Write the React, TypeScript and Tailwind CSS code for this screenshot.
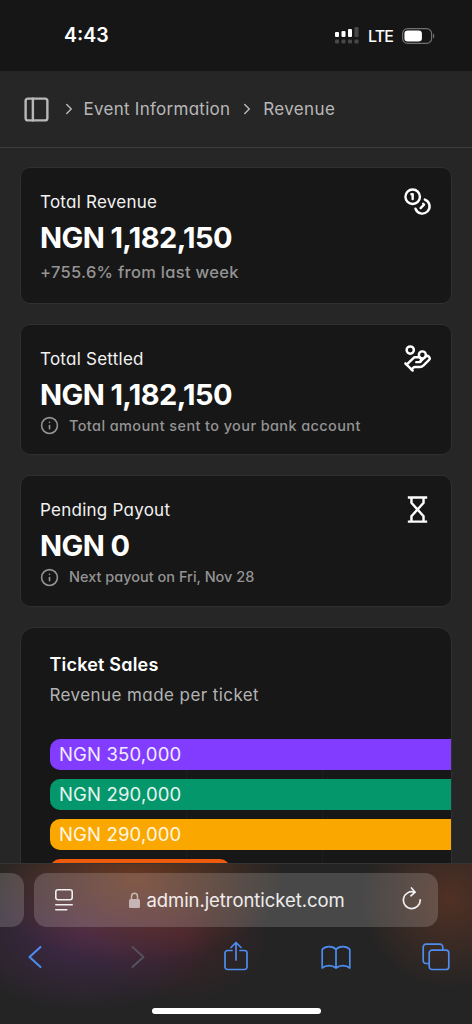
import type { ReactNode } from 'react'
import { ChevronRight, HandCoins, Info, PanelLeft } from 'lucide-react'

interface Stat {
  title: string
  amount: string
  note: string
  noteClass: string
  info: boolean
  icon: ReactNode
}

interface Bar {
  label: string
  className: string
}

function CoinsIcon() {
  return (
    <svg
      viewBox="0 0 24 24"
      className="size-[29px]"
      fill="none"
      stroke="currentColor"
      strokeWidth="2"
      strokeLinecap="round"
      strokeLinejoin="round"
    >
      <circle cx="8" cy="8" r="6" />
      <path d="M18.09 10.37A6 6 0 1 1 10.34 18" />
      <path d="M7 6h1v4" />
      <path d="m16.71 13.88.7.71-2.82 2.82" />
    </svg>
  )
}

function HourglassIcon() {
  return (
    <svg viewBox="0 0 24 24" className="size-[29px]" fill="none" stroke="currentColor" strokeWidth="2">
      <path d="M4 2h16M4 22h16" />
      <path d="M7 2v4.500L12 12l5-5.500V2M7 22v-4.500L12 12l5 5.500V22" />
    </svg>
  )
}

const stats: Stat[] = [
  {
    title: 'Total Revenue',
    amount: 'NGN 1,182,150',
    note: '+755.6% from last week',
    noteClass: 'text-[16.5px] leading-6 mt-[4px] tracking-[0.3px]',
    info: false,
    icon: <CoinsIcon />,
  },
  {
    title: 'Total Settled',
    amount: 'NGN 1,182,150',
    note: 'Total amount sent to your bank account',
    noteClass: 'text-[14.5px] leading-5 mt-[3px] tracking-[0.39px]',
    info: true,
    icon: <HandCoins size={29} />,
  },
  {
    title: 'Pending Payout',
    amount: 'NGN 0',
    note: 'Next payout on Fri, Nov 28',
    noteClass: 'text-[14.5px] leading-5 mt-[3px] tracking-[0px]',
    info: true,
    icon: <HourglassIcon />,
  },
]

const bars: Bar[] = [
  { label: 'NGN 350,000', className: 'bg-[#813cff]' },
  { label: 'NGN 290,000', className: 'bg-[#04976b]' },
  { label: 'NGN 290,000', className: 'bg-[#faa700]' },
]

function StatusBar() {
  return (
    <div className="flex h-[71px] shrink-0 items-center justify-between bg-[#161616] pr-[37px] pl-16 text-white">
      <span className="font-[Inter] text-[19.5px] font-semibold">4:43</span>
      <div className="flex items-center">
        <svg width="24" height="17" viewBox="0 0 24 17" fill="#fff">
          <rect x="0" y="5" width="4" height="5" rx="1" />
          <rect x="6.5" y="4" width="4" height="6" rx="1" />
          <rect x="13" y="2" width="4" height="8" rx="1" />
          <g fill="#484848">
            <rect x="19.5" y="0" width="4" height="10" rx="1" />
            <rect x="0" y="12.5" width="4" height="4" rx="1" />
            <rect x="6.5" y="12.5" width="4" height="4" rx="1" />
            <rect x="13" y="12.5" width="4" height="4" rx="1" />
            <rect x="19.5" y="12.5" width="4" height="4" rx="1" />
          </g>
        </svg>
        <span className="ml-[9px] font-[Inter] text-[16px] font-medium tracking-[-0.9px]">LTE</span>
        <svg className="ml-[9px]" width="33" height="16" viewBox="0 0 33 16">
          <rect x="0.6" y="0.6" width="29" height="14.8" rx="5" fill="none" stroke="#717171" strokeWidth="1.2" />
          <rect x="2.4" y="2.4" width="17.5" height="11.2" rx="3.3" fill="#fff" />
          <path d="M31 5.5c1.8.8 1.8 4.200 0 5z" fill="#717171" />
        </svg>
      </div>
    </div>
  )
}

function StatCard({ stat }: { stat: Stat }) {
  return (
    <section className="flex items-start justify-between rounded-[10px] border border-[#303030] bg-[#171717] px-[19px] pt-[19px] pb-[18.5px]">
      <div className="pt-[3px]">
        <h2 className="text-[17px] leading-6 tracking-[0.25px] text-[#f2f2f2]">{stat.title}</h2>
        <p className="mt-[6px] text-[29px] leading-9 font-bold tracking-[-0.6px] text-white">{stat.amount}</p>
        <p className={`flex items-center gap-[10px] font-medium text-[#949494] ${stat.noteClass}`}>
          {stat.info && <Info size={19} />}
          {stat.note}
        </p>
      </div>
      <div className="text-white">{stat.icon}</div>
    </section>
  )
}

function TicketSales() {
  return (
    <section className="h-[320px] shrink-0 rounded-[14px] border border-[#303030] bg-[#171717] pt-[25px] pl-[28.5px]">
      <h2 className="text-[18px] leading-6 font-semibold tracking-[0.2px] text-white">Ticket Sales</h2>
      <p className="mt-[6px] text-[17px] leading-6 tracking-[0.42px] text-[#b3b3b3]">Revenue made per ticket</p>
      <div className="mt-[32.5px] flex flex-col gap-[9px] bg-[linear-gradient(to_right,transparent_136px,#1e1e1e_136px,#1e1e1e_137px,transparent_137px,transparent_272px,#1e1e1e_272px,#1e1e1e_273px,transparent_273px)]">
        {bars.map((bar, i) => (
          <div
            key={i}
            className={`flex h-[31px] items-center rounded-l-[10px] pt-px pl-[9.5px] text-[18.5px] tracking-[0.15px] text-white/90 ${bar.className}`}
          >
            {bar.label}
          </div>
        ))}
        <div className="h-[31px] w-[180px] rounded-[10px] bg-[#f05a0c]" />
      </div>
    </section>
  )
}

function BrowserBar() {
  return (
    <footer className="h-[161px] shrink-0 overflow-hidden border-t border-[#343434] bg-[#242424] bg-[radial-gradient(ellipse_150px_85px_at_135px_15px,#80401fb8,transparent),radial-gradient(ellipse_130px_80px_at_85px_68px,#5b2b6b90,transparent),radial-gradient(ellipse_90px_70px_at_180px_70px,#6b203060,transparent),radial-gradient(ellipse_90px_90px_at_450px_35px,#6b3824a0,transparent)]">
      <div className="mt-[9px] flex gap-[10px]">
        <div className="h-[54px] w-6 rounded-r-[13px] bg-white/17" />
        <div className="flex h-[54px] w-[404px] items-center rounded-[13px] bg-white/17 pr-[16px] pl-[21px] text-white/90">
          <svg width="18" height="22" viewBox="0 0 18 22" fill="none" stroke="currentColor" strokeWidth="1.600" strokeLinecap="round">
            <rect x="0.8" y="0.8" width="16.400" height="10" rx="2.200" />
            <path d="M0.8 15.700h16.400M0.8 20.800h11" />
          </svg>
          <div className="flex flex-1 items-center justify-center">
            <svg width="11" height="16" viewBox="0 0 11 16">
              <path d="M2.500 8V4.500a3 3.300 0 0 1 6 0V8" fill="none" stroke="#ffffff90" strokeWidth="1.500" />
              <rect x="0" y="7" width="11" height="9" rx="1.500" fill="#c5b3b6" />
            </svg>
            <span className="mr-[1px] ml-[6px] pt-px font-[Inter] text-[18.5px] tracking-[-0.06px] [font-feature-settings:normal]">
              admin.jetronticket.com
            </span>
          </div>
          <svg className="-mt-1" width="20" height="23" viewBox="0 0 20 23" fill="none" stroke="currentColor" strokeWidth="1.700" strokeLinecap="round" strokeLinejoin="round">
            <path d="M18.200 12.800A8.400 8.400 0 1 1 12.500 5.200" />
            <path d="M9.500 1l3.600 4.200-4.200 3.600" />
          </svg>
        </div>
        <div className="h-[54px] w-6" />
      </div>
      <div className="mt-[10px] flex h-10 items-center justify-between pr-[22px] pl-7 text-[#4d8df0]">
        <svg width="14" height="24" viewBox="0 0 14 24" fill="none" stroke="currentColor" strokeWidth="2" strokeLinecap="round" strokeLinejoin="round">
          <path d="M12.500 2L1.500 12l11 10" />
        </svg>
        <svg className="ml-[18px]" width="14" height="24" viewBox="0 0 14 24" fill="none" stroke="#56515a" strokeWidth="2" strokeLinecap="round" strokeLinejoin="round">
          <path d="M1.500 2l11 10-11 10" />
        </svg>
        <svg className="-mt-[2px] mr-[3px] ml-[7px]" width="26" height="30" viewBox="0 0 26 30" fill="none" stroke="currentColor" strokeWidth="1.700" strokeLinecap="round" strokeLinejoin="round">
          <path d="M9 9.500H4.500a2.500 2.500 0 0 0-2.500 2.500v14a2.500 2.500 0 0 0 2.500 2.500h17a2.500 2.500 0 0 0 2.500-2.500V12a2.500 2.500 0 0 0-2.500-2.500H17" />
          <path d="M13 19V1.500M8 6.500l5-5 5 5" />
        </svg>
        <svg className="-ml-px" width="30" height="25" viewBox="0 0 30 25" fill="none" stroke="currentColor" strokeWidth="1.700" strokeLinejoin="round">
          <path d="M15 4.500C12 .7 4.500.4 1.200 4.500v18.500C5 19.800 11 19.800 15 23c4-3.200 10-3.200 13.800 0V4.500C25.500.4 18 .7 15 4.500zM15 4.500V23" />
        </svg>
        <svg width="28" height="28" viewBox="0 0 28 28" fill="none" stroke="currentColor" strokeWidth="1.700" strokeLinejoin="round">
          <path d="M7 20.500H4A2.800 2.800 0 0 1 1.200 17.700V4A2.800 2.800 0 0 1 4 1.200h14A2.800 2.800 0 0 1 20.800 4v3" />
          <rect x="7.200" y="7.200" width="19.600" height="19.300" rx="2.800" />
        </svg>
      </div>
      <div className="mx-auto mt-[31px] h-[6px] w-[169px] rounded-full bg-white" />
    </footer>
  )
}

export default function App() {
  return (
    <div className="flex h-screen w-full flex-col overflow-hidden bg-[#262626] font-[Inter,sans-serif] [font-feature-settings:'cv11']">
      <StatusBar />
      <header className="flex h-[77px] shrink-0 items-center border-b border-[#3b3b3b] pl-[21.500px] text-[#b8b8b8]">
        <PanelLeft size={29} />
        <ChevronRight className="ml-[9px]" size={18} />
        <span className="ml-[6px] pt-[2px] text-[17px] tracking-[0.27px]">Event Information</span>
        <ChevronRight className="ml-[8px]" size={18} />
        <span className="ml-[7px] pt-[2px] text-[17px] tracking-[0.35px]">Revenue</span>
      </header>
      <main className="flex min-h-0 flex-1 flex-col gap-5 overflow-hidden px-5 pt-[19px]">
        {stats.map((stat) => (
          <StatCard key={stat.title} stat={stat} />
        ))}
        <TicketSales />
      </main>
      <BrowserBar />
    </div>
  )
}
